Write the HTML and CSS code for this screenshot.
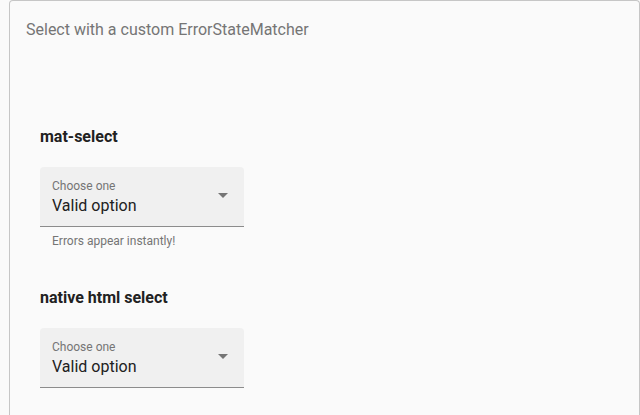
FILE: index.html
```html
<!DOCTYPE html>
<html>
<head>
<meta charset="utf-8">
<link rel="stylesheet" href="styles.css">
</head>
<body>
<div class="card">
  <div class="title">Select with a custom ErrorStateMatcher</div>
  <div class="content">
    <h4 class="heading">mat-select</h4>
    <div class="field">
      <div class="label">Choose one</div>
      <div class="value">Valid option</div>
      <span class="arrow"></span>
    </div>
    <div class="hint">Errors appear instantly!</div>
    <h4 class="heading second">native html select</h4>
    <div class="field">
      <div class="label">Choose one</div>
      <div class="value">Valid option</div>
      <span class="arrow"></span>
    </div>
  </div>
</div>
</body>
</html>
```
FILE: styles.css
```css
html, body {
  margin: 0;
  padding: 0;
  background: #fafafa;
  font-family: Roboto, "Liberation Sans", sans-serif;
  height: 100%;
  overflow: hidden;
}
.card {
  margin-left: 9px;
  border: 1px solid #c6c6c6;
  border-bottom: none;
  border-radius: 4px 4px 0 0;
  background: #fafafa;
  min-height: 420px;
  box-sizing: border-box;
}
.title {
  padding: 19px 16px 0 16px;
  font-size: 16px;
  line-height: 20px;
  color: #757575;
}
.content {
  padding: 85px 0 0 30px;
}
.heading {
  margin: 0;
  font-size: 16px;
  line-height: 24px;
  font-weight: 700;
  color: #212121;
}
.second {
  margin-top: 38px;
}
.field {
  position: relative;
  margin-top: 18px;
  width: 204px;
  height: 60px;
  box-sizing: border-box;
  background: #f0f0f0;
  border-radius: 4px 4px 0 0;
  border-bottom: 1px solid #8c8c8c;
  padding: 11px 12px 0 12px;
}
.label {
  font-size: 12px;
  line-height: 16px;
  color: #757575;
}
.value {
  font-size: 16px;
  line-height: 24px;
  color: #212121;
}
.arrow {
  position: absolute;
  right: 16px;
  top: 26px;
  width: 0;
  height: 0;
  border-left: 5px solid transparent;
  border-right: 5px solid transparent;
  border-top: 5px solid #757575;
}
.hint {
  padding: 7px 0 0 12px;
  font-size: 12px;
  line-height: 14px;
  color: #757575;
}
```
